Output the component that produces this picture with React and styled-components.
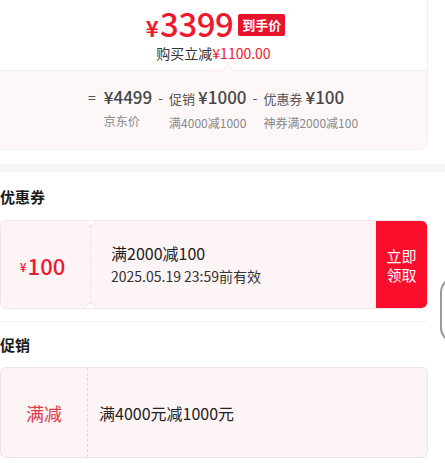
import React from "react";
import styled, { createGlobalStyle } from "styled-components";

const red = "#f0182d";
const cjk = `"Noto Sans CJK SC", "Noto Sans", sans-serif`;

const GlobalStyle = createGlobalStyle`
  html, body {
    margin: 0;
    padding: 0;
    background: #ffffff;
  }
  body {
    font-family: ${cjk};
    color: #222222;
    overflow: hidden;
  }
`;

const Page = styled.div`
  position: relative;
  width: 445px;
  height: 463px;
  overflow: hidden;
`;

const Content = styled.div`
  width: 428px;
`;

const PriceCard = styled.div`
  border-right: 1px solid #efefef;
  border-bottom: 1px solid #efefef;
  border-radius: 0 0 8px 0;
`;

const PriceHead = styled.div`
  padding: 8px 0 8px;
  display: flex;
  flex-direction: column;
  align-items: center;
`;

const PriceLine = styled.div`
  display: flex;
  align-items: center;
  height: 34px;
  padding-left: 4px;
`;

const Price = styled.span`
  color: ${red};
  font-size: 33px;
  line-height: 30px;
  font-weight: 500;
  letter-spacing: -0.5px;
  small {
    font-size: 22px;
    font-weight: 700;
    margin-right: 2px;
  }
`;

const Badge = styled.span`
  margin-left: 5px;
  background: #e8132a;
  color: #ffffff;
  font-size: 13px;
  font-weight: 700;
  height: 22px;
  line-height: 22px;
  padding: 0 4px;
  border-radius: 2px;
`;

const SaveLine = styled.div`
  margin-top: 2px;
  font-size: 14px;
  line-height: 18px;
  color: #333333;
  em {
    font-style: normal;
    color: ${red};
  }
`;

const Breakdown = styled.div`
  position: relative;
  background: #fdf7f8;
  border-top: 1px solid #f7eef0;
  border-radius: 0 0 8px 0;
  padding: 16px 0 18px 88px;
  display: flex;
  align-items: flex-start;
  gap: 6px;
  &::before {
    content: "";
    position: absolute;
    left: 223px;
    top: -5px;
    width: 8px;
    height: 8px;
    background: #fdf7f8;
    border-left: 1px solid #f5eaec;
    border-top: 1px solid #f5eaec;
    transform: rotate(45deg);
  }
`;

const Sign = styled.span`
  font-size: 14px;
  line-height: 20px;
  color: #555555;
  margin-right: ${(p) => (p.$pad ? "2px" : "0")};
`;

const Term = styled.div`
  display: flex;
  flex-direction: column;
  gap: 6px;
`;

const TermValue = styled.div`
  line-height: 20px;
  font-size: 17px;
  font-weight: 500;
  color: #474747;
  white-space: nowrap;
  span {
    font-size: 13px;
    font-weight: 400;
    color: #555555;
    margin-right: 3px;
  }
`;

const TermLabel = styled.div`
  font-size: 12px;
  line-height: 16px;
  color: #8a8a8a;
  white-space: nowrap;
`;

const Strip = styled.div`
  height: 8px;
  margin-top: 14px;
  width: 445px;
  background: #f5f6fa;
`;

const Section = styled.section`
  padding: ${(p) => p.$top}px 0 ${(p) => p.$bottom}px;
  border-bottom: ${(p) => (p.$line ? "1px solid #f2f2f2" : "none")};
`;

const Heading = styled.h3`
  margin: 0 0 ${(p) => p.$gap}px;
  font-size: 15px;
  line-height: 20px;
  font-weight: 700;
  color: #1a1a1a;
`;

const Coupon = styled.div`
  display: flex;
  height: 89px;
  box-sizing: border-box;
  border: 1px solid #f3e6e8;
  border-radius: 6px;
  background: #fdf4f5;
  overflow: hidden;
`;

const CouponValue = styled.div`
  box-sizing: border-box;
  width: 89px;
  display: flex;
  align-items: center;
  justify-content: center;
  color: ${red};
  font-size: 22px;
  font-weight: 500;
  padding-right: 6px;
  small {
    font-size: 12px;
    margin-right: 1px;
    margin-top: 4px;
  }
`;

const Perforation = styled.div`
  position: relative;
  width: 0;
  border-left: 1px dashed ${(p) => p.$color};
  &::before,
  &::after {
    content: "";
    position: absolute;
    left: -6px;
    width: 9px;
    height: 9px;
    border-radius: 50%;
    background: #ffffff;
    border: 1px solid #f0e2e4;
    display: ${(p) => (p.$notch ? "block" : "none")};
  }
  &::before {
    top: -6px;
  }
  &::after {
    bottom: -6px;
  }
`;

const CouponInfo = styled.div`
  flex: 1;
  padding-left: 20px;
  display: flex;
  flex-direction: column;
  justify-content: center;
  gap: 3px;
`;

const CouponTitle = styled.div`
  font-size: 16px;
  line-height: 21px;
  color: #222222;
`;

const CouponDate = styled.div`
  font-size: 14px;
  line-height: 19px;
  color: #333333;
`;

const GrabButton = styled.button`
  width: 51px;
  border: none;
  border-radius: 0 5px 5px 0;
  background: #fb0e2b;
  color: #ffffff;
  font-family: ${cjk};
  font-size: 15px;
  line-height: 19px;
  padding: 0;
`;

const Promo = styled.div`
  display: flex;
  height: 91px;
  box-sizing: border-box;
  border: 1px solid #f0e2e4;
  border-radius: 6px;
  background: #fdf4f5;
`;

const PromoTag = styled.div`
  width: 86px;
  display: flex;
  align-items: center;
  justify-content: center;
  font-size: 18px;
  color: #de3a4a;
`;

const PromoText = styled.div`
  flex: 1;
  padding-left: 11px;
  display: flex;
  align-items: center;
  font-size: 16px;
  color: #222222;
`;

const SideHandle = styled.div`
  position: absolute;
  left: 440px;
  top: 277px;
  width: 30px;
  height: 66px;
  box-sizing: border-box;
  border: 2px solid #9b9b9b;
  border-radius: 16px;
  background: #ffffff;
`;

const terms = [
  { sign: "=", label: "", value: "¥4499", note: "京东价" },
  { sign: "-", label: "促销", value: "¥1000", note: "满4000减1000" },
  { sign: "-", label: "优惠券", value: "¥100", note: "神券满2000减100" },
];

export default function App() {
  return (
    <Page>
      <GlobalStyle />
      <Content>
        <PriceCard>
          <PriceHead>
            <PriceLine>
              <Price>
                <small>¥</small>3399
              </Price>
              <Badge>到手价</Badge>
            </PriceLine>
            <SaveLine>
              购买立减<em>¥1100.00</em>
            </SaveLine>
          </PriceHead>
          <Breakdown>
            {terms.map((t, i) => (
              <React.Fragment key={i}>
                <Sign $pad={i === 0}>{t.sign}</Sign>
                <Term>
                  <TermValue>
                    {t.label && <span>{t.label}</span>}
                    {t.value}
                  </TermValue>
                  <TermLabel>{t.note}</TermLabel>
                </Term>
              </React.Fragment>
            ))}
          </Breakdown>
        </PriceCard>
      </Content>
      <Strip />
      <Content>
        <Section $top={15} $bottom={12} $line>
          <Heading $gap={13}>优惠券</Heading>
          <Coupon>
            <CouponValue>
              <small>¥</small>100
            </CouponValue>
            <Perforation $notch $color="#f1e4e6" />
            <CouponInfo>
              <CouponTitle>满2000减100</CouponTitle>
              <CouponDate>2025.05.19 23:59前有效</CouponDate>
            </CouponInfo>
            <GrabButton>
              立即
              <br />
              领取
            </GrabButton>
          </Coupon>
        </Section>
        <Section $top={13} $bottom={0}>
          <Heading $gap={12}>促销</Heading>
          <Promo>
            <PromoTag>满减</PromoTag>
            <Perforation $color="#ecd2d6" />
            <PromoText>满4000元减1000元</PromoText>
          </Promo>
        </Section>
      </Content>
      <SideHandle />
    </Page>
  );
}
